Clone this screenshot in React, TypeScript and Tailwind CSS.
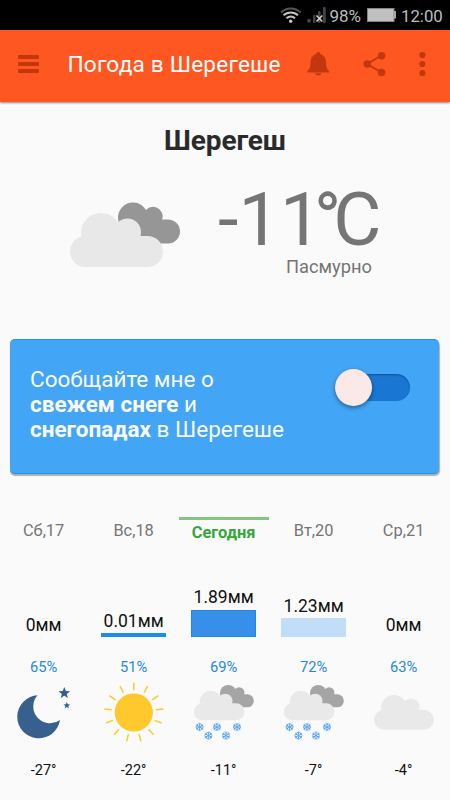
import React from "react";

const FrontCloud = ({ fill }: { fill: string }) => (
  <g fill={fill}>
    <circle cx="31" cy="31" r="20" />
    <circle cx="57.5" cy="30" r="13.5" />
    <rect x="0" y="34" width="93" height="31" rx="15.5" />
  </g>
);

const BackCloud = ({ fill }: { fill: string }) => (
  <g fill={fill}>
    <circle cx="63" cy="15.5" r="15" />
    <circle cx="83" cy="14.5" r="9.7" />
    <rect x="50" y="17.5" width="60" height="24" rx="12" />
  </g>
);

const Flake = ({ x, y }: { x: number; y: number }) => (
  <g transform={`translate(${x} ${y})`} stroke="#4a9bef" strokeWidth="0.8" fill="none">
    {[0, 60, 120, 180, 240, 300].map((a) => (
      <path key={a} transform={`rotate(${a})`} d="M0 0V-4.1M-1.5 -3.6L0 -2.2L1.5 -3.6" />
    ))}
  </g>
);

const Moon = () => (
  <svg width="60" height="60" viewBox="0 0 60 60" fill="#38608f">
    <path d="M23.5 13.3A21.5 21.5 0 1 0 46 38A16.8 16.8 0 0 1 23.5 13.3Z" />
    <path
      transform="translate(50.3 11)"
      d="M0-6L1.6-2L5.8-1.8L2.5.9L3.6 5L0 2.7L-3.6 5L-2.5.9L-5.8-1.8L-1.6-2Z"
    />
    <path
      transform="translate(52.8 23.5) scale(.58)"
      d="M0-6L1.6-2L5.8-1.8L2.5.9L3.6 5L0 2.7L-3.6 5L-2.5.9L-5.8-1.8L-1.6-2Z"
    />
  </svg>
);

const Sun = () => (
  <svg width="60" height="60" viewBox="0 0 60 60">
    <circle cx="29.8" cy="30.5" r="19.1" fill="#ffc82c" />
    {Array.from({ length: 13 }, (_, i) => (
      <path
        key={i}
        transform={`rotate(${(i * 360) / 13} 29.8 30.5)`}
        d="M29.8 8.2V.7"
        stroke="#ffc82c"
        strokeWidth="1.5"
      />
    ))}
  </svg>
);

const SnowCloud = () => (
  <svg width="60" height="60" viewBox="0 0 60 60">
    <g transform="translate(-.2 2.7) scale(.546)">
      <BackCloud fill="#a5a5a5" />
      <FrontCloud fill="#e9e9e9" />
    </g>
    <Flake x={5.6} y={45} />
    <Flake x={23} y={45} />
    <Flake x={43} y={45} />
    <Flake x={14.4} y={53.6} />
    <Flake x={32} y={53.6} />
  </svg>
);

const LightCloud = () => (
  <svg width="60" height="60" viewBox="0 0 60 60">
    <g transform="translate(0 5.9) scale(.643)">
      <FrontCloud fill="#e9e9e9" />
    </g>
  </svg>
);

type Day = {
  name: string;
  today?: boolean;
  amount: string;
  bar: string;
  humidity: string;
  icon: React.ReactNode;
  temp: string;
};

const days: Day[] = [
  { name: "Сб,17", amount: "0мм", bar: "", humidity: "65%", icon: <Moon />, temp: "-27°" },
  { name: "Вс,18", amount: "0.01мм", bar: "h-[4px] bg-[#1c8cee]", humidity: "51%", icon: <Sun />, temp: "-22°" },
  { name: "Сегодня", today: true, amount: "1.89мм", bar: "h-[27.5px] bg-[#378fe9] border border-[#1c86ea]", humidity: "69%", icon: <SnowCloud />, temp: "-11°" },
  { name: "Вт,20", amount: "1.23мм", bar: "h-[19px] bg-[#c2ddf8]", humidity: "72%", icon: <SnowCloud />, temp: "-7°" },
  { name: "Ср,21", amount: "0мм", bar: "", humidity: "63%", icon: <LightCloud />, temp: "-4°" },
];

export default function App() {
  return (
    <div className="h-[800px] w-[450px] overflow-hidden bg-[#fafafa] font-[Roboto,'Noto_Sans',sans-serif] whitespace-nowrap">
      <div className="flex h-[30px] items-center bg-black pl-[280px] text-[#bdbdbd]">
        <svg width="22" height="30" viewBox="280 0 22 30" fill="none" strokeWidth="2">
          <path d="M281 12.5A14 14 0 0 1 300.5 12.5" stroke="#555" />
          <path d="M283.5 15.3A10.5 10.5 0 0 1 298 15.3M286.5 18.2A6.5 6.5 0 0 1 295 18.2" stroke="#c4c4c4" />
          <circle cx="290.7" cy="21.2" r="1.7" fill="#c4c4c4" />
        </svg>
        <svg className="ml-[4px]" width="22" height="30" viewBox="306 0 22 30">
          <g fill="#444">
            <circle cx="309" cy="20.8" r="2" />
            <rect x="313" y="15" width="2.5" height="8" rx="1" />
            <rect x="318" y="11" width="2.5" height="12" rx="1" />
            <rect x="323" y="7" width="2.8" height="16" rx="1" />
          </g>
          <path d="M316.5 15.5L322.3 21.5M322.3 15.5L316.5 21.5" stroke="#d0d0d0" strokeWidth="1.6" />
        </svg>
        <span className="ml-[1.5px] w-[36.5px] pt-[1px] text-[17px] leading-[30px] tracking-[-0.1px]">98%</span>
        <svg width="30" height="30" viewBox="366 0 30 30">
          <rect x="367.5" y="8.5" width="26.5" height="13" fill="#c0c0c0" stroke="#858585" />
          <path d="M394 11h2v7.5h-2z" fill="#a5a5a5" />
        </svg>
        <span className="ml-[5px] pt-[1px] text-[16.8px] leading-[30px]">12:00</span>
      </div>

      <header className="flex h-[72px] items-center bg-[#ff5722] pb-[4px] pl-[18px] text-white shadow-[0_1px_2px_rgba(0,0,0,0.45)]">
        <div className="flex w-[21px] flex-col gap-[3px]">
          <div className="h-[4px] rounded-[1px] bg-[#c2370d]" />
          <div className="h-[4px] rounded-[1px] bg-[#c2370d]" />
          <div className="h-[4px] rounded-[1px] bg-[#c2370d]" />
        </div>
        <h1 className="ml-[28.5px] w-[238.5px] pt-[2px] text-[22.6px] leading-[30px] tracking-[0.2px]">Погода в Шерегеше</h1>
        <svg width="24" height="26" viewBox="306 51 24 26" fill="#c2370d">
          <path d="M318.3 52C319.5 52 320.2 52.8 320.3 54C324 55.2 326 58.5 326 62.5C326 67 327 69 329 71V72.5H307.3V71C309.5 69 310.5 67 310.5 62.5C310.5 58.5 312.5 55.2 316.3 54C316.4 52.8 317 52 318.3 52ZM315 73.3H321.5A3.3 2.8 0 0 1 315 73.3Z" />
        </svg>
        <svg className="ml-[32px]" width="24" height="26" viewBox="362 51 24 26" fill="#c2370d">
          <path d="M381.5 55.5L367 64L381.5 72.5" fill="none" stroke="#c2370d" strokeWidth="2" />
          <circle cx="381.6" cy="55.7" r="3.7" />
          <circle cx="367.2" cy="64" r="3.7" />
          <circle cx="381.6" cy="72.5" r="3.7" />
        </svg>
        <svg className="ml-[31px]" width="10" height="26" viewBox="417 51 10 26" fill="#c2370d">
          <circle cx="422.4" cy="55" r="3.1" />
          <circle cx="422.4" cy="64" r="3.1" />
          <circle cx="422.4" cy="73" r="3.1" />
        </svg>
      </header>

      <section className="h-[237px] pt-[21px]">
        <h2 className="text-center text-[28px] leading-[36px] font-bold tracking-[-0.1px] text-[#2a2a2a]">Шерегеш</h2>
        <div className="flex pl-[70px]">
          <svg className="mt-[43px]" width="112" height="66" viewBox="0 0 112 66">
            <BackCloud fill="#969696" />
            <FrontCloud fill="#e8e8e8" />
          </svg>
          <div className="ml-[36px] w-[180px] pt-[26px] text-[#757575]">
            <div className="h-[70px] text-[74px] leading-[70px]">
              -1<span className="tracking-[-8px]">1°C</span>
            </div>
            <p className="mr-[26px] text-right text-[18.3px] leading-[24px]">Пасмурно</p>
          </div>
        </div>
      </section>

      <section className="mr-[11px] ml-[10px] flex h-[135px] rounded-[5px] border-y border-[#1e96f0] bg-[#42a5f5] pt-[27px] pl-[20px] shadow-[0.5px_2px_1px_rgba(0,0,0,0.3)]">
        <p className="w-[305px] text-[22.5px] leading-[25px] text-[#fafafa]">
          Сообщайте мне о
          <br />
          <b className="font-bold">свежем снеге</b> и
          <br />
          <b className="font-bold">снегопадах</b> в Шерегеше
        </p>
        <div className="mt-[7px] flex h-[27px] w-[75px] items-center rounded-full bg-[#1976d2] shadow-[inset_0_1px_2px_rgba(0,0,0,0.3)]">
          <div className="h-[37px] w-[37px] shrink-0 rounded-full bg-[#fbe9e7] shadow-[0_2px_4px_rgba(0,0,0,0.4)]" />
        </div>
      </section>

      <section className="ml-[-1.4px] flex pt-[43px]">
        {days.map((day) => (
          <div key={day.name} className="flex w-[90px] shrink-0 flex-col items-center text-[#101010]">
            <div
              className={
                day.today
                  ? "h-[28px] w-full border-t-[3px] border-[#81c784] pt-[2px] text-center text-[16.4px] leading-[22px] font-bold text-[#34a839]"
                  : "h-[28px] pt-[3px] text-[16.4px] leading-[22px] text-[#757575]"
              }
            >
              {day.name}
            </div>
            <div className="flex h-[92px] flex-col items-center justify-end">
              <div className={day.today ? "mb-[3px] text-[17.5px] leading-[20px]" : "mb-[2px] text-[17.5px] leading-[20px]"}>{day.amount}</div>
              <div className={`w-[65px] ${day.bar}`} />
            </div>
            <div className="mt-[20px] h-[20px] text-[14.7px] leading-[20px] text-[#1c8ae6]">{day.humidity}</div>
            <div className="mt-[4.5px] h-[60px]">{day.icon}</div>
            <div className="mt-[19.5px] text-[14.5px] leading-[20px]">{day.temp}</div>
          </div>
        ))}
      </section>
    </div>
  );
}
